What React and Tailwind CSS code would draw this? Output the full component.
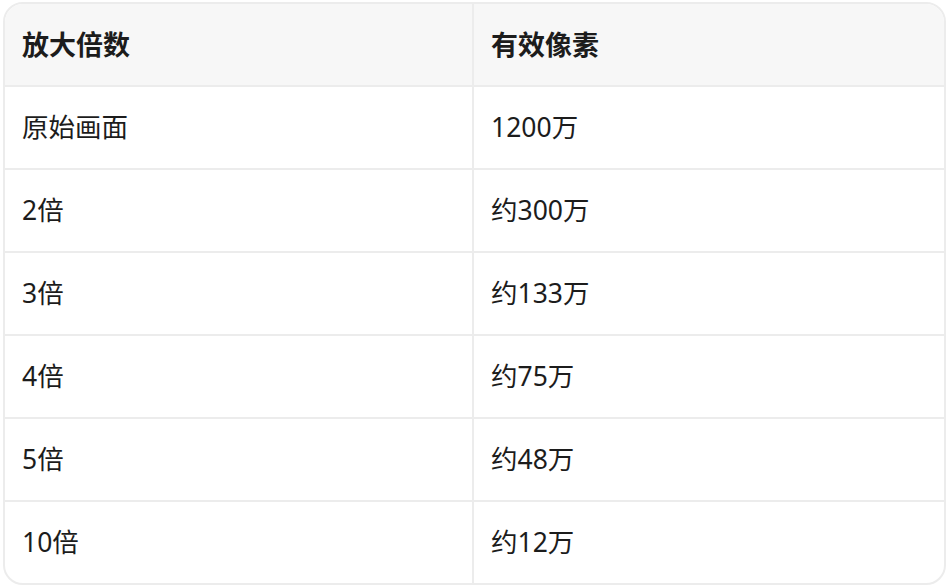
export default function App() {
  const rows = [
    ["原始画面", "1200万"],
    ["2倍", "约300万"],
    ["3倍", "约133万"],
    ["4倍", "约75万"],
    ["5倍", "约48万"],
    ["10倍", "约12万"],
  ];
  const font = { fontFamily: '"Noto Sans", "Noto Sans CJK SC", sans-serif' };
  return (
    <div className="w-[948px] h-[588px] bg-white pt-[2px] pl-[3px] pr-[2px]" style={font}>
      <div className="border-2 border-[#ececec] rounded-[20px] overflow-hidden">
        <div className="grid grid-cols-[469px_1fr] bg-[#f7f7f7] border-b-2 border-[#ececec]">
          <div className="h-[81px] flex items-center pl-[17px] pt-[1px] border-r-2 border-[#ececec] text-[27px] font-bold text-[#1c1c1c]">放大倍数</div>
          <div className="h-[81px] flex items-center pl-[17px] pt-[1px] text-[27px] font-bold text-[#1c1c1c]">有效像素</div>
        </div>
        {rows.map((r, i) => (
          <div
            key={i}
            className={
              i < rows.length - 1
                ? "grid grid-cols-[469px_1fr] border-b-2 border-[#ececec]"
                : "grid grid-cols-[469px_1fr]"
            }
          >
            <div className="h-[81px] flex items-center pl-[17px] border-r-2 border-[#ececec] text-[26.5px] text-[#1c1c1c]">{r[0]}</div>
            <div className="h-[81px] flex items-center pl-[17px] text-[26.5px] text-[#1c1c1c]">{r[1]}</div>
          </div>
        ))}
      </div>
    </div>
  );
}
